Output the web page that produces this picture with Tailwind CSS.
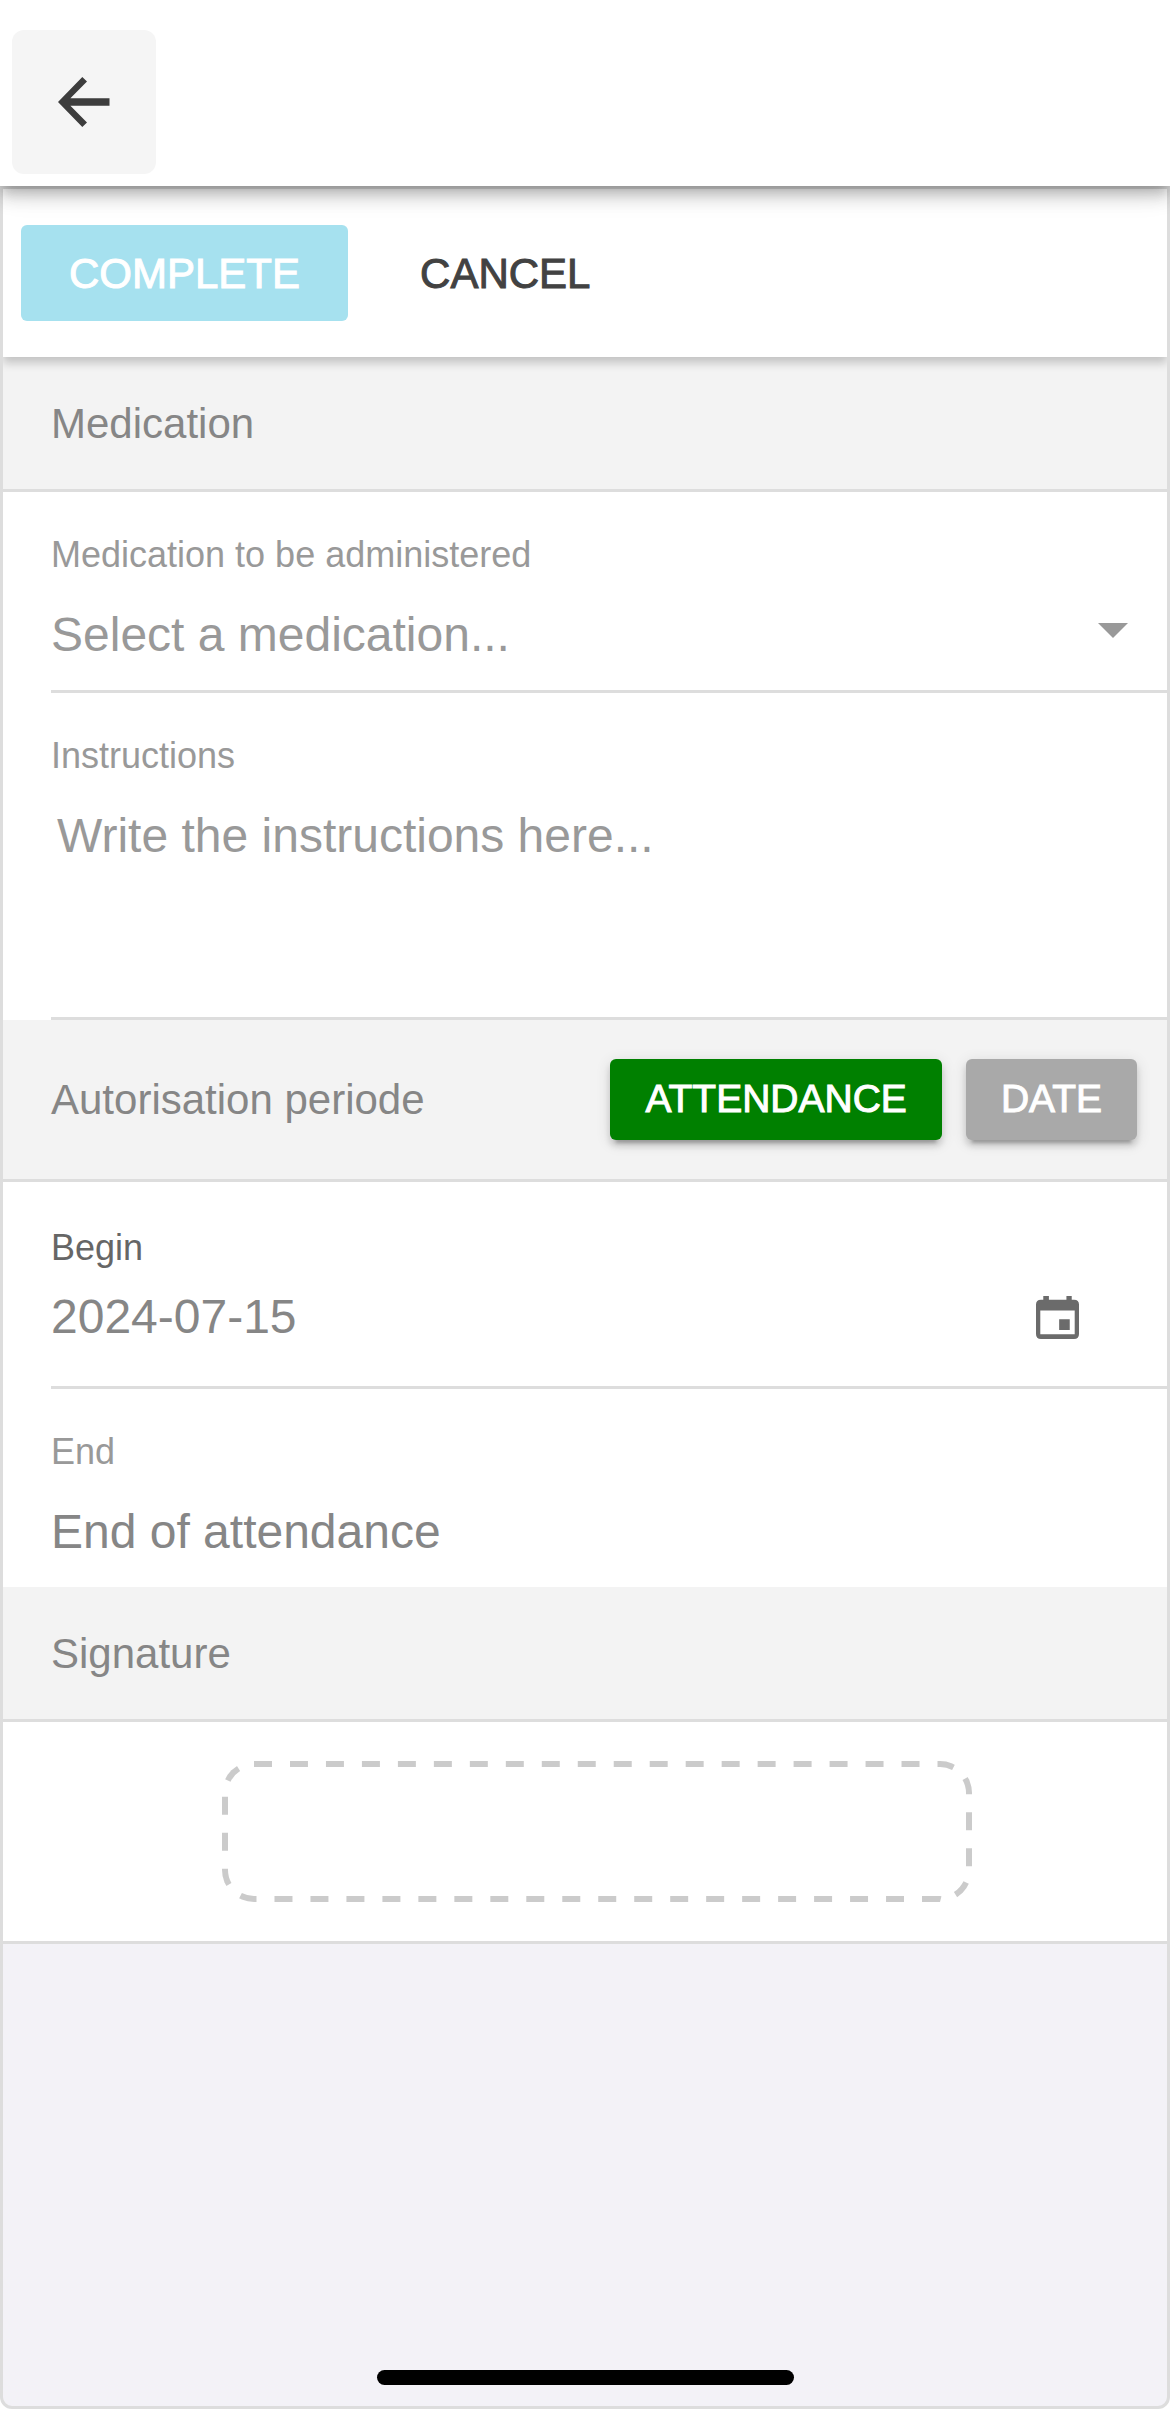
<!DOCTYPE html>
<html lang="en">
<head>
<meta charset="utf-8">
<meta name="viewport" content="width=device-width, initial-scale=1">
<title>Medication authorisation</title>
<script src="https://cdn.jsdelivr.net/npm/@tailwindcss/browser@4"></script>
</head>
<body class="flex min-h-screen flex-col bg-white font-['Liberation_Sans',Arial,sans-serif] text-[42px] text-[#868686]">
  <header class="relative z-20 bg-white px-3 pt-[30px] pb-3 shadow-[0_6px_12px_-3px_rgba(0,0,0,0.2),0_12px_15px_rgba(0,0,0,0.14),0_3px_30px_rgba(0,0,0,0.12)]">
    <button type="button" aria-label="Back" class="flex size-36 items-center justify-center rounded-xl bg-[#f5f5f5] text-[#3d3d3d]">
      <svg class="h-[50px] w-[52px]" viewBox="0 0 52 50" fill="currentColor" aria-hidden="true"><path d="M24.3 0 29 4.4 12.4 21.3H51.5V28.7H12.4L29 45.6 24.3 50 0 25Z"/></svg>
    </button>
  </header>

  <main class="flex flex-1 flex-col overflow-hidden rounded-b-xl border-[3px] border-[#ddd] bg-[#f3f2f7]">
    <div class="relative z-10 flex gap-6 bg-white px-[18px] py-9 shadow-[0_6px_9px_rgba(0,0,0,0.2)]">
      <button type="button" disabled class="h-24 rounded-md bg-[#a6e1ef] px-12 text-white [-webkit-text-stroke:1px]">COMPLETE</button>
      <button type="button" class="h-24 rounded-md px-12 text-[#424242] [-webkit-text-stroke:1px]">CANCEL</button>
    </div>

    <form class="flex flex-col border-b-[3px] border-[#ddd] bg-white">
      <h2 class="flex h-[135px] items-center border-b-[3px] border-[#ddd] bg-[#f3f3f3] pl-12">Medication</h2>

      <div class="ml-12 border-b-[3px] border-[#ddd] pt-[39px] pb-6 text-[#999]">
        <label for="medication" class="block text-4xl leading-[48px]">Medication to be administered</label>
        <div class="mt-6 grid items-center pr-[39px]">
          <select id="medication" class="col-start-1 row-start-1 h-[63px] w-full appearance-none bg-transparent text-5xl leading-[63px] outline-none">
            <option>Select a medication...</option>
          </select>
          <svg class="pointer-events-none col-start-1 row-start-1 mb-2 h-[15px] w-[30px] justify-self-end" viewBox="0 0 30 15" fill="currentColor" aria-hidden="true"><path d="M0 0H30L15 15Z"/></svg>
        </div>
      </div>

      <div class="ml-12 border-b-[3px] border-[#ddd] pt-[39px] pb-6 text-[#999]">
        <label for="instructions" class="block text-4xl leading-[48px]">Instructions</label>
        <textarea id="instructions" placeholder="Write the instructions here..." class="mt-6 block h-[189px] w-full resize-none bg-transparent pl-[6px] text-5xl leading-[63px] outline-none placeholder:text-[#999]"></textarea>
      </div>

      <div class="flex items-center justify-between border-b-[3px] border-[#ddd] bg-[#f3f3f3] py-[39px] pr-[30px] pl-12">
        <h2>Autorisation periode</h2>
        <div class="flex gap-6 text-[39px] text-white [-webkit-text-stroke:1px]">
          <button type="button" class="h-[81px] rounded-md bg-[#008000] px-[35px] shadow-[0_9px_3px_-6px_rgba(0,0,0,0.2),0_6px_6px_rgba(0,0,0,0.14),0_3px_15px_rgba(0,0,0,0.12)]">ATTENDANCE</button>
          <button type="button" class="h-[81px] rounded-md bg-[#a9a9a9] px-[35px] shadow-[0_9px_3px_-6px_rgba(0,0,0,0.2),0_6px_6px_rgba(0,0,0,0.14),0_3px_15px_rgba(0,0,0,0.12)]">DATE</button>
        </div>
      </div>

      <div class="ml-12 border-b-[3px] border-[#ddd] pt-[42px] pb-[39px]">
        <label for="begin" class="block text-4xl leading-[48px] text-[#666]">Begin</label>
        <div class="mt-[15px] flex h-[60px] items-center pr-[88px]">
          <input id="begin" type="text" value="2024-07-15" class="min-w-0 flex-1 bg-transparent text-5xl leading-[60px] outline-none">
          <button type="button" aria-label="Choose date" class="text-[#6b6b6b]">
            <svg class="block size-[43px]" viewBox="0 0 130 130" fill="currentColor" aria-hidden="true"><path fill-rule="evenodd" d="M22 0H39V11H92V0H108V11H115Q130 11 130 26V115Q130 130 115 130H15Q0 130 0 115V26Q0 11 15 11H22ZM13 44V116H117V44ZM70 70H102V103H70Z"/></svg>
          </button>
        </div>
      </div>

      <div class="ml-12 pt-[39px] pb-6">
        <label for="end" class="block text-4xl leading-[48px] text-[#999]">End</label>
        <input id="end" type="text" readonly value="End of attendance" class="mt-6 block h-[63px] w-full bg-transparent text-5xl leading-[63px] outline-none">
      </div>

      <h2 class="flex h-[135px] items-center border-b-[3px] border-[#ddd] bg-[#f3f3f3] pl-12">Signature</h2>

      <div class="flex justify-center py-[39px] pr-6 pl-12">
        <button type="button" aria-label="Add signature" class="max-w-full">
          <svg class="block h-[141px] w-[750px] max-w-full" viewBox="0 0 750 141" fill="none" aria-hidden="true">
            <clipPath id="pad"><rect width="750" height="141" rx="32"/></clipPath>
            <rect width="750" height="141" rx="32" pathLength="1728" stroke="#cbcbcb" stroke-width="12" stroke-dasharray="18 18" clip-path="url(#pad)"/>
          </svg>
        </button>
      </div>
    </form>

    <div class="mx-auto mt-auto mb-[21px] h-[15px] w-[417px] max-w-full rounded-full bg-black"></div>
  </main>
</body>
</html>
